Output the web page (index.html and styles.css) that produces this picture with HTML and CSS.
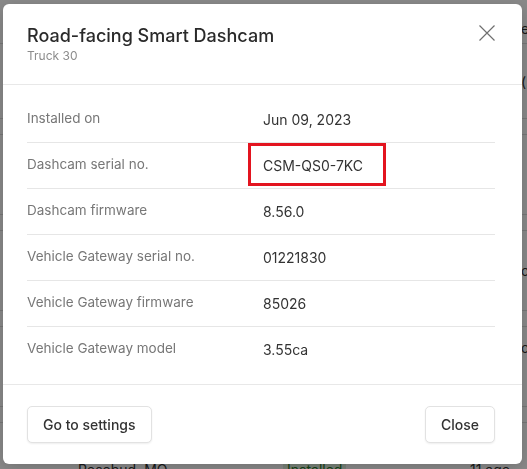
FILE: index.html
```html
<!DOCTYPE html>
<html lang="en">
<head>
<meta charset="utf-8">
<title>Road-facing Smart Dashcam</title>
<link rel="stylesheet" href="styles.css">
</head>
<body>
<div class="page">
  <div class="page-head"><span class="edge">e</span></div>
  <div class="prow first"><span class="edge">(</span></div>
  <div class="psub"></div>
  <div class="prow"></div>
  <div class="psub"></div>
  <div class="prow"><span class="edge">c</span></div>
  <div class="psub"></div>
  <div class="prow top"><span class="edge">c</span></div>
  <div class="psub"></div>
  <div class="prow last">
    <span class="pc1">Rosebud, MO</span>
    <span class="pc2"><span class="badge">Installed</span></span>
    <span class="pc3">11 ago</span>
  </div>
</div>
<div class="overlay"></div>
<div class="modal" role="dialog" aria-labelledby="mtitle">
  <header class="modal-head">
    <div class="titles">
      <h2 class="title" id="mtitle">Road-facing Smart Dashcam</h2>
      <div class="subtitle">Truck 30</div>
    </div>
    <button class="close-x" aria-label="Close">
      <svg width="16" height="16" viewBox="0 0 16 16"><path d="M0.5 0.5 L15.5 15.5 M15.5 0.5 L0.5 15.5" stroke="#6f6f6f" stroke-width="1.2" fill="none"/></svg>
    </button>
  </header>
  <div class="modal-body">
    <dl class="details">
      <div class="row"><dt>Installed on</dt><dd>Jun 09, 2023</dd></div>
      <div class="row"><dt>Dashcam serial no.</dt><dd><span class="mark">CSM-QS0-7KC</span></dd></div>
      <div class="row"><dt>Dashcam firmware</dt><dd>8.56.0</dd></div>
      <div class="row"><dt>Vehicle Gateway serial no.</dt><dd>01221830</dd></div>
      <div class="row"><dt>Vehicle Gateway firmware</dt><dd>85026</dd></div>
      <div class="row"><dt>Vehicle Gateway model</dt><dd>3.55ca</dd></div>
    </dl>
  </div>
  <footer class="modal-foot">
    <button class="btn">Go to settings</button>
    <button class="btn">Close</button>
  </footer>
</div>
</body>
</html>
```
FILE: styles.css
```css
html, body {
  margin: 0;
  padding: 0;
  overflow: hidden;
}
body {
  width: 527px;
  height: 469px;
  position: relative;
  background: #fff;
  font-family: Inter, "Noto Sans", sans-serif;
  color: #333;
}

/* background page */
.page {
  display: flex;
  flex-direction: column;
  height: 469px;
  overflow: hidden;
}
.page-head {
  flex: none;
  height: 44px;
  box-sizing: border-box;
  border-bottom: 1px solid #dcdcdc;
  display: flex;
  align-items: flex-end;
  padding-bottom: 6px;
}
.prow {
  flex: none;
  height: 79px;
  border-bottom: 1px solid #dcdcdc;
  display: flex;
  align-items: center;
  font-size: 14px;
  white-space: nowrap;
}
.prow.first { height: 74px; }
.prow.top { align-items: flex-start; padding-top: 12px; height: 67px; }
.prow.last {
  border-bottom: none;
  align-items: flex-start;
  padding-top: 38px;
  height: 20px;
}
.psub {
  flex: none;
  height: 15px;
  border-bottom: 1px solid #dcdcdc;
}
.edge {
  margin-left: 521px;
  font-size: 14px;
  color: #333;
}
.pc1 { margin-left: 78px; width: 205px; }
.pc2 { width: 187px; }
.pc3 { width: 50px; white-space: nowrap; }
.badge {
  background: #dff3df;
  color: #2c7a2c;
  padding: 1px 4px;
}

.overlay {
  position: fixed;
  inset: 0;
  background: rgba(0, 0, 0, 0.46);
}

/* modal */
.modal {
  position: absolute;
  left: 3px;
  top: 4px;
  width: 519px;
  height: 460px;
  background: #fff;
  border-radius: 6px;
  box-shadow: 0 4px 16px rgba(0, 0, 0, 0.18);
  display: flex;
  flex-direction: column;
}
.modal-head {
  height: 81px;
  box-sizing: border-box;
  padding: 20px 27px 0 24px;
  border-bottom: 1px solid #e8e8e8;
  display: flex;
  justify-content: space-between;
  align-items: flex-start;
}
.title {
  margin: 0;
  font-size: 18px;
  line-height: 24px;
  font-weight: 500;
  color: #2a2a2a;
}
.subtitle {
  font-size: 12px;
  line-height: 16px;
  color: #8c8c8c;
}
.close-x {
  margin-top: 1px;
  width: 16px;
  height: 16px;
  padding: 0;
  border: 0;
  background: none;
  display: flex;
}

.modal-body {
  padding: 12px 27px 12px 24px;
}
.details {
  margin: 0;
}
.row {
  height: 45px;
  border-bottom: 1px solid #e6e6e6;
  display: grid;
  grid-template-columns: 236px 1fr;
  align-items: center;
}
.row:last-child {
  border-bottom: none;
}
.row dt {
  font-size: 13.5px;
  line-height: 18px;
  color: #777;
  padding-bottom: 3px;
}
.row dd {
  margin: 0;
  font-size: 14px;
  line-height: 20px;
  color: #333;
}
.mark {
  position: relative;
  display: inline-block;
}
.mark::after {
  content: "";
  position: absolute;
  left: -15px;
  top: -13px;
  width: 138px;
  height: 43px;
  box-sizing: border-box;
  border: 3px solid #e3141f;
}

.modal-foot {
  border-top: 1px solid #e8e8e8;
  padding: 21px 27px 21px 24px;
  display: flex;
  justify-content: space-between;
}
.btn {
  height: 37px;
  padding: 0 15px;
  background: #fff;
  border: 1px solid #e2e2e2;
  border-radius: 5px;
  box-shadow: 0 1px 2px rgba(0, 0, 0, 0.07);
  font-family: Inter, "Noto Sans", sans-serif;
  font-size: 14px;
  font-weight: 500;
  color: #333;
}
```
